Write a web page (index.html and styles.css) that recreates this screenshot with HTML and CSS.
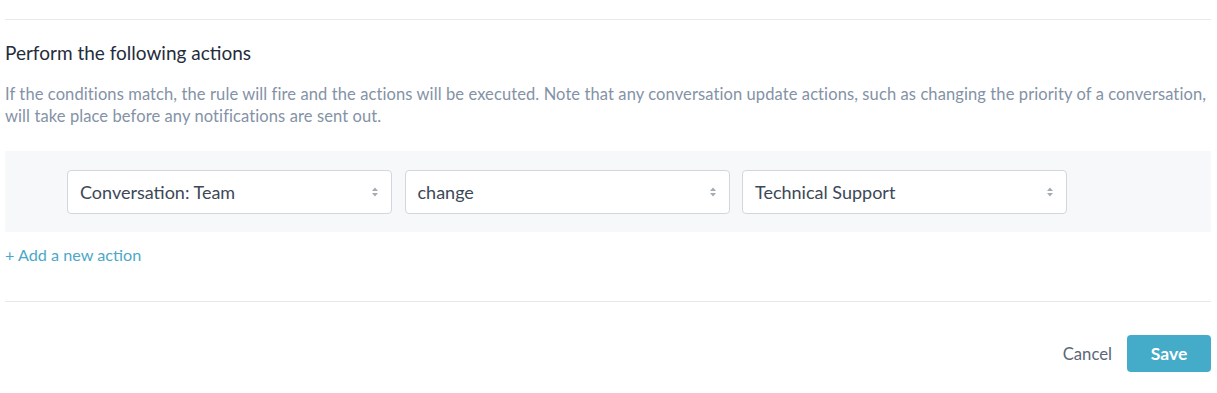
FILE: index.html
```html
<!DOCTYPE html>
<html>
<head>
<meta charset="utf-8">
<link rel="stylesheet" href="styles.css">
</head>
<body>
<div class="page">
  <hr class="rule top">
  <h2 class="title">Perform the following actions</h2>
  <p class="desc">If the conditions match, the rule will fire and the actions will be executed. Note that any conversation update actions, such as changing the priority of a conversation, will take place before any notifications are sent out.</p>
  <div class="actions">
    <div class="select"><span>Conversation: Team</span><svg class="caret" width="6" height="10" viewBox="0 0 6 10"><path d="M0 4 L3 0.5 L6 4 Z M0 6 L3 9.5 L6 6 Z" fill="#a3abb5"/></svg></div>
    <div class="select"><span>change</span><svg class="caret" width="6" height="10" viewBox="0 0 6 10"><path d="M0 4 L3 0.5 L6 4 Z M0 6 L3 9.5 L6 6 Z" fill="#a3abb5"/></svg></div>
    <div class="select"><span>Technical Support</span><svg class="caret" width="6" height="10" viewBox="0 0 6 10"><path d="M0 4 L3 0.5 L6 4 Z M0 6 L3 9.5 L6 6 Z" fill="#a3abb5"/></svg></div>
  </div>
  <a class="add" href="#">+ Add a new action</a>
  <hr class="rule bottom">
  <div class="footer">
    <a class="cancel" href="#">Cancel</a>
    <button class="save">Save</button>
  </div>
</div>
</body>
</html>
```
FILE: styles.css
```css
html, body { margin: 0; padding: 0; background: #fff; }
body { font-family: Lato, "Open Sans", sans-serif; }
.page { padding: 0 6px 0 5px; }
.rule { border: 0; border-top: 1px solid #e7e9ec; margin: 0; }
.rule.top { margin-top: 19px; }
.title { font-size: 19px; font-weight: 400; color: #1f2d3d; margin: 21px 0 0; line-height: 24px; }
.desc { font-size: 16.5px; letter-spacing: 0.1px; color: #8492a6; margin: 18px 0 0; line-height: 22px; }
.actions { margin-top: 24px; background: #f7f8fa; height: 81px; display: flex; align-items: center; padding-left: 62px; gap: 12.5px; }
.select { width: 325px; height: 44px; box-sizing: border-box; border: 1px solid #d3d7dd; border-radius: 4px; background: #fff; display: flex; align-items: center; justify-content: space-between; padding: 0 13px 0 12px; font-size: 18px; color: #3c4858; }
.caret { display: block; }
.add { display: block; margin-top: 12px; font-size: 16.2px; color: #4aa8c8; text-decoration: none; line-height: 22px; }
.rule.bottom { margin-top: 35px; }
.footer { display: flex; justify-content: flex-end; align-items: center; margin-top: 33px; gap: 15px; }
.cancel { font-size: 16.7px; color: #5b6778; text-decoration: none; }
.save { width: 84px; height: 37px; border: 0; border-radius: 4px; background: #44acc9; color: #fff; font-family: Lato, sans-serif; font-size: 17.5px; font-weight: 700; padding: 0; }
```
